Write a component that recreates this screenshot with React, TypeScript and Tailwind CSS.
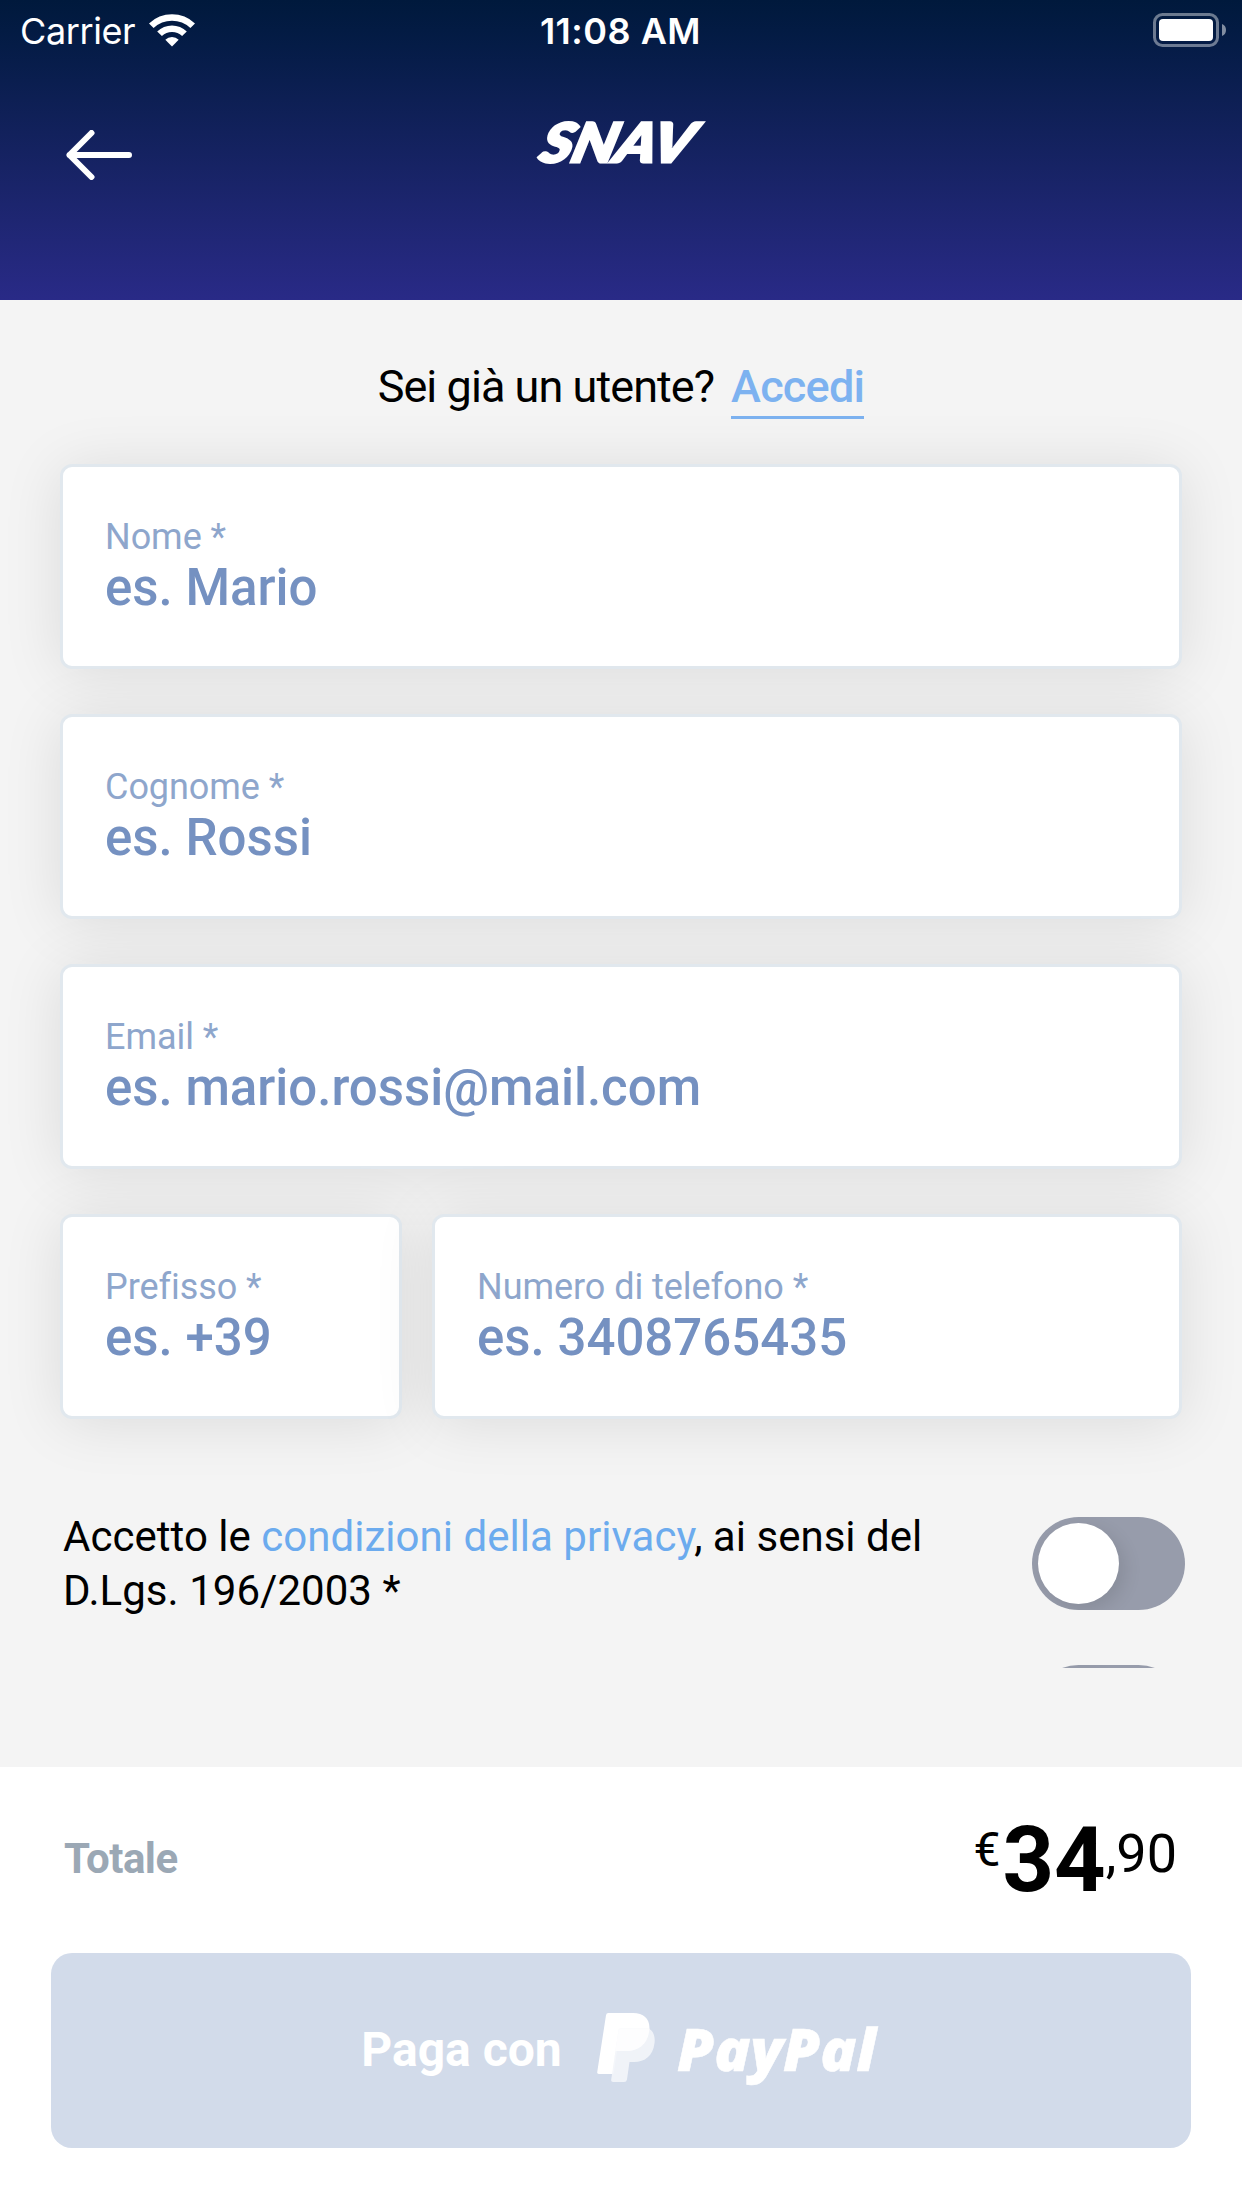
import type { ReactNode } from "react";

type FieldProps = {
    label: string;
    placeholder: string;
    className?: string;
};

function Field({ label, placeholder, className = "" }: FieldProps) {
    return (
        <label
            className={`flex h-[205px] flex-col rounded-xl border-3 border-[#e1e8ee] bg-white pt-[46px] pl-[42px] shadow-[0_4px_60px_rgba(0,0,0,0.1)] ${className}`}
        >
            <span className="text-[36px] leading-[48px] tracking-[-0.05px] text-[#8ea6cc]">{label}</span>
            <input
                type="text"
                placeholder={placeholder}
                className="-mt-[2px] h-[58px] w-full bg-transparent text-[51px] leading-[58px] font-medium outline-none placeholder:text-[#7591c1]"
            />
        </label>
    );
}

function Toggle() {
    return (
        <button className="h-[93px] w-[153px] shrink-0 overflow-hidden rounded-full bg-[#979cab] p-[6px]">
            <span className="block size-[81px] rounded-full bg-white shadow-[6px_6px_18px_rgba(0,0,0,0.1)]" />
        </button>
    );
}

function StatusBar() {
    return (
        <div className="grid h-[60px] grid-cols-3 items-center pr-[15px] pl-[20px] font-['Inter',sans-serif] text-[36px] leading-[57px] text-white">
            <div className="flex items-center gap-[14px]">
                <span className="pt-[3px] tracking-[-0.4px]">Carrier</span>
                <svg width="46" height="34" viewBox="0 0 46 34" fill="#fff">
                    <path d="M0 10.500a33 33 0 0 1 46 0l-4.600 4.600a26.400 26.400 0 0 0-36.800 0z" />
                    <path d="M8.200 18.400a21.200 21.200 0 0 1 29.600 0l-4.700 4.700a14.600 14.600 0 0 0-20.200 0z" />
                    <path d="M16.300 26.700a9.600 9.600 0 0 1 13.400 0L23 33.500z" />
                </svg>
            </div>
            <span className="-ml-[6px] pt-[3px] text-center font-semibold tracking-[0.5px] whitespace-nowrap">11:08 AM</span>
            <svg className="justify-self-end" width="74" height="34" viewBox="0 0 74 34">
                <rect x="1.5" y="1.5" width="63" height="31" rx="8" fill="none" stroke="#fff" strokeOpacity="0.42" strokeWidth="3" />
                <rect x="6" y="6" width="54" height="22" rx="4" fill="#fff" />
                <path d="M69 11a6.500 6.500 0 0 1 0 12z" fill="#fff" fillOpacity="0.5" />
            </svg>
        </div>
    );
}

function Header() {
    return (
        <header className="h-[300px] bg-linear-to-b from-[#00193c] to-[#292a87]">
            <StatusBar />
            <div className="grid grid-cols-3 px-[66px] pt-[60px]">
                <button className="pt-[10px]">
                    <svg width="66" height="50" viewBox="0 0 66 50" fill="none" stroke="#fff" strokeWidth="6" strokeLinecap="round" strokeLinejoin="round">
                        <path d="M25.500 3 3.500 25l22 22M3.500 25H63" />
                    </svg>
                </button>
                <svg className="justify-self-center overflow-visible" width="174" height="46" viewBox="0 0 174 46">
                    <text
                        x="4"
                        y="42"
                        transform="translate(11 0) skewX(-15)"
                        fill="#fff"
                        stroke="#fff"
                        strokeWidth="3"
                        textLength="151"
                        lengthAdjust="spacingAndGlyphs"
                        className="font-['Lato',sans-serif] text-[54px] font-black italic"
                    >
                        SNAV
                    </text>
                </svg>
            </div>
        </header>
    );
}

function PayPalLogo() {
    return (
        <div className="flex">
            <svg width="58" height="70" viewBox="0 0 58 70">
                <path d="M9 2.200A2.500 2.500 0 0 1 11.400 0H36c11 0 17 6.500 16.400 15.500C51.500 30 42 38 30 38H20l-3.500 23H1.800A1.600 1.600 0 0 1 .2 59.200z" fill="#fff" />
                <path d="M21.500 17.500A2.500 2.500 0 0 1 24 15.300h27c5 2 7.500 7.500 6.500 15C56 43 48 49 37 49h-4.500L30 66.500a3 3 0 0 1-3 2.500H16.200a2 2 0 0 1-2-2.400z" fill="#f3f5fa" fillOpacity="0.9" />
                <path d="M21.500 17.500A2.500 2.500 0 0 1 24 15.300h28.400C52 30 42 38 30 38H18.300z" fill="#fdfdfe" />
            </svg>
            <svg className="ml-[22px] overflow-visible" width="202" height="70" viewBox="0 0 202 70">
                <text
                    x="0"
                    y="58"
                    fill="#fff"
                    stroke="#fff"
                    strokeWidth="0.5"
                    textLength="199"
                    lengthAdjust="spacingAndGlyphs"
                    className="font-['Open_Sans',sans-serif] text-[59px] font-extrabold italic"
                >
                    PayPal
                </text>
            </svg>
        </div>
    );
}

function Consent({ children }: { children: ReactNode }) {
    return (
        <div className="flex h-[148px] items-start justify-between">
            <p className="-mt-[7px] w-[900px] text-[42px] leading-[54px] tracking-[0.03px] text-black">{children}</p>
            <Toggle />
        </div>
    );
}

export default function App() {
    return (
        <div className="flex h-[2208px] w-[1242px] flex-col overflow-hidden bg-[#f4f4f4] font-['Roboto',sans-serif]">
            <Header />

            {/* Form */}
            <main className="h-[1368px] overflow-hidden pt-[57px]">
                <div className="flex h-[107px] items-start justify-center gap-[17px] text-[45px] leading-[59px]">
                    <span className="tracking-[-0.95px] text-black">Sei già un utente?</span>
                    <a href="#" className="border-b-3 border-[#7db2f0] font-medium tracking-[-0.75px] text-[#7db2f0]">
                        Accedi
                    </a>
                </div>

                <div className="flex flex-col gap-[45px] px-[60px]">
                    <Field label="Nome *" placeholder="es. Mario" />
                    <Field label="Cognome *" placeholder="es. Rossi" />
                    <Field label="Email *" placeholder="es. mario.rossi@mail.com" />
                    <div className="flex gap-[30px]">
                        <Field label="Prefisso *" placeholder="es. +39" className="w-[342px]" />
                        <Field label="Numero di telefono *" placeholder="es. 3408765435" className="flex-1" />
                    </div>
                </div>

                <div className="pt-[98px] pr-[57px] pl-[63px]">
                    <Consent>
                        Accetto le <span className="text-[#6cabee]">condizioni della privacy</span>, ai sensi del D.Lgs. 196/2003 *
                    </Consent>
                    <Consent>{null}</Consent>
                </div>
            </main>

            {/* Checkout */}
            <footer className="mt-[99px] flex-1 bg-white px-[51px]">
                <div className="flex h-[186px] justify-between pr-[14px] pl-[13px]">
                    <span className="pt-[67px] text-[42px] leading-[50px] font-bold tracking-[-0.5px] text-[#9ba8b5]">Totale</span>
                    <div className="flex items-start text-black">
                        <span className="mr-[2px] pt-[55px] text-[48px] leading-[56px]">€</span>
                        <span className="pt-[39px] text-[90px] leading-[110px] font-bold">34</span>
                        <span className="pt-[55px] text-[54px] leading-[64px]">,90</span>
                    </div>
                </div>
                <button className="flex h-[195px] w-full justify-center rounded-[21px] bg-[#d2dbea] pt-[60px] pr-[2px] text-white">
                    <span className="mr-[35px] pt-[9px] text-[48px] leading-[56px] font-bold">Paga con</span>
                    <PayPalLogo />
                </button>
            </footer>
        </div>
    );
}
